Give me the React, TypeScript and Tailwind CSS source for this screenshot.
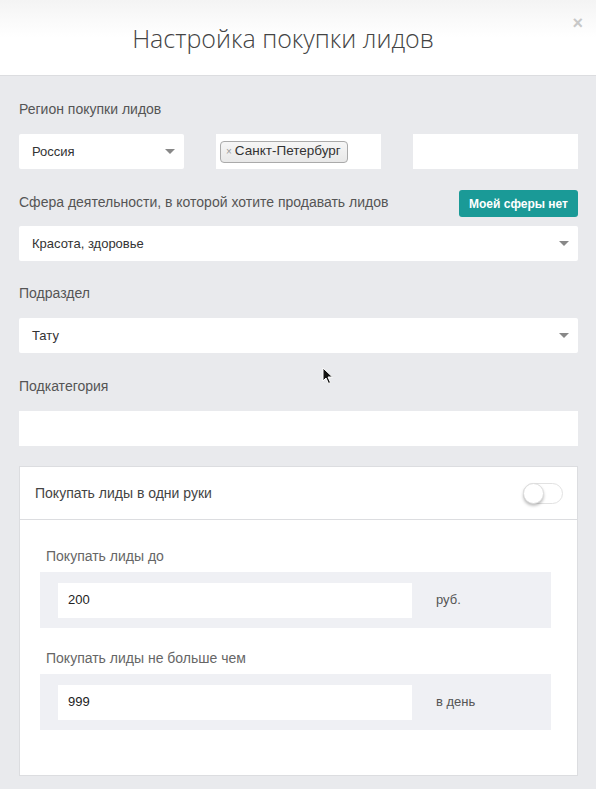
import type { ReactNode } from 'react';

const sans = { fontFamily: '"Liberation Sans", Arial, sans-serif' };

function Caret() {
  return (
    <span className="h-0 w-0 border-x-[5px] border-t-[5px] border-x-transparent border-t-[#888]" />
  );
}

function Label({ children, className = '' }: { children: ReactNode; className?: string }) {
  return <div className={`text-[14px] text-[#555] ${className}`}>{children}</div>;
}

function Select({ value, className = '' }: { value: string; className?: string }) {
  return (
    <div className={`flex h-[35px] items-center justify-between rounded-[2px] bg-white pl-[13px] pr-[9px] text-[13px] text-[#333] ${className}`}>
      <span>{value}</span>
      <Caret />
    </div>
  );
}

function Toggle() {
  return (
    <div className="relative h-[21px] w-[40px] rounded-full border border-[#e2e2e2] bg-white">
      <span className="absolute -left-px -top-px h-[21px] w-[21px] rounded-full border border-[#ddd] bg-white shadow-[0_2px_3px_rgba(0,0,0,0.25)]" />
    </div>
  );
}

function AmountField({ label, value, unit }: { label: string; value: string; unit: string }) {
  return (
    <div>
      <Label className="mb-[5px] pl-[6px] text-[13px] text-[#666]">{label}</Label>
      <div className="flex h-[56px] items-center bg-[#eff0f4] pl-[18px]">
        <div className="flex h-[35px] w-[354px] items-center bg-white pl-[10px] text-[13px] text-[#222]">
          {value}
        </div>
        <span className="ml-[24px] text-[13px] text-[#555]">{unit}</span>
      </div>
    </div>
  );
}

export default function App() {
  return (
    <div className="relative h-[789px] w-[596px] overflow-hidden bg-[#e9eaed]" style={sans}>
      <header className="relative flex h-[76px] items-center justify-center border-b border-[#dcdde0] bg-gradient-to-b from-[#f4f4f4] via-white to-white pr-[30px]">
        <h1
          className="pt-[2px] text-[25px] font-light text-[#444]"
          style={{ fontFamily: '"Open Sans", sans-serif' }}
        >
          Настройка покупки лидов
        </h1>
        <span className="absolute right-[13px] top-[14px] text-[18px] font-bold leading-none text-[#c8c8c8]">×</span>
      </header>

      <div className="pl-[19px] pr-[18px] pt-[23px]">
        <Label>Регион покупки лидов</Label>
        <div className="mt-[14px] grid grid-cols-3 gap-[32px]">
          <Select value="Россия" className="pr-[8px]" />
          <div className="flex h-[35px] items-center bg-white pl-[4px]">
            <span className="flex h-[22px] items-center gap-[3px] rounded-[4px] border border-[#aaa] bg-gradient-to-b from-[#f6f6f6] to-[#e8e8e8] pl-[5px] pr-[6px] text-[13.5px] text-[#333]">
              <span className="text-[10px] text-[#999]">×</span>
              Санкт-Петербург
            </span>
          </div>
          <div className="h-[35px] bg-white" />
        </div>

        <div className="mt-[21px] flex items-center justify-between">
          <Label className="-mt-[3px]">Сфера деятельности, в которой хотите продавать лидов</Label>
          <button className="h-[27px] rounded-[3px] bg-[#1a9a97] px-[10px] text-[12px] font-bold text-white">
            Моей сферы нет
          </button>
        </div>
        <Select value="Красота, здоровье" className="mt-[9px]" />

        <Label className="mt-[22px]">Подраздел</Label>
        <Select value="Тату" className="mt-[14px]" />

        <Label className="mt-[23px]">Подкатегория</Label>
        <div className="mt-[14px] h-[35px] bg-white" />

        <section className="mt-[20px] h-[310px] border border-[#dcdde0] bg-white">
          <div className="flex h-[53px] items-center justify-between border-b border-[#dcdde0] pl-[15px] pr-[14px]">
            <span className="text-[14px] text-[#444]">Покупать лиды в одни руки</span>
            <Toggle />
          </div>
          <div className="flex flex-col gap-[20px] pl-[20px] pr-[26px] pt-[26px]">
            <AmountField label="Покупать лиды до" value="200" unit="руб." />
            <AmountField label="Покупать лиды не больше чем" value="999" unit="в день" />
          </div>
        </section>
      </div>

      {/* mouse pointer */}
      <svg className="absolute left-[322px] top-[367px]" width="12" height="18" viewBox="0 0 12 18">
        <path d="M1 1 L1 14 L4 11 L6.5 16.5 L8.5 15.5 L6 10 L10.5 10 Z" fill="#111" stroke="#fff" strokeWidth="1" />
      </svg>
    </div>
  );
}
